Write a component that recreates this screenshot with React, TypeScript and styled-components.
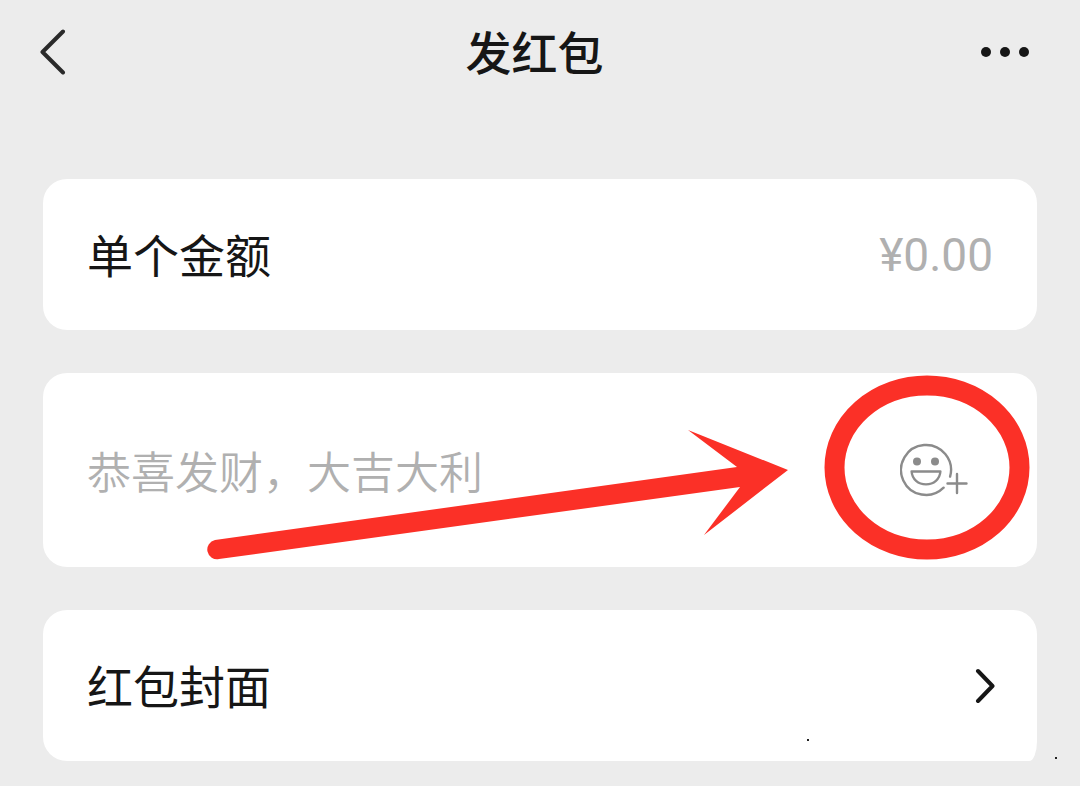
import React from "react";
import styled, { createGlobalStyle, css } from "styled-components";

const GlobalStyle = createGlobalStyle`
  * {
    box-sizing: border-box;
  }
  body {
    margin: 0;
    background: #ececec;
    color: #161616;
    font-family: Roboto, "Noto Sans CJK SC", sans-serif;
  }
`;

const Page = styled.div`
  min-height: 100vh;
`;

const Header = styled.header`
  display: flex;
  align-items: center;
  justify-content: space-between;
  height: 104px;
  padding: 0 50px 0 40px;
`;

const Title = styled.h1`
  margin: 0;
  padding-top: 4px;
  font-size: 46px;
  font-weight: 500;
  line-height: 64px;
`;

const IconButton = styled.button`
  display: flex;
  flex: none;
  align-items: center;
  padding: 0;
  border: 0;
  background: none;
  color: inherit;
  cursor: pointer;
`;

const Form = styled.form`
  display: flex;
  flex-direction: column;
  gap: 43px;
  padding: 75px 43px 25px;
`;

const cardStyle = css`
  position: relative;
  display: flex;
  align-items: center;
  justify-content: space-between;
  width: 100%;
  min-height: 151px;
  padding: 0 42px 0 44px;
  border: 0;
  border-radius: 24px;
  background: #ffffff;
  color: inherit;
  font: inherit;
  font-size: 46px;
  line-height: 64px;
  text-align: left;
`;

const Card = styled.div<{ $tall?: boolean }>`
  ${cardStyle}
  ${({ $tall }) => ($tall ? "min-height: 194px; padding-right: 67px;" : "padding-right: 44px;")}
`;

const CardButton = styled.button`
  ${cardStyle}
  border-bottom-right-radius: 8px 20px;
  cursor: pointer;
`;

const Label = styled.label`
  padding-top: 4px;
`;

const Field = styled.input`
  flex: 1;
  min-width: 0;
  height: 72px;
  padding: 0;
  border: 0;
  outline: 0;
  background: none;
  color: #161616;
  font: inherit;

  &::placeholder {
    color: #b0b0b0;
    opacity: 1;
  }
`;

const AmountField = styled(Field)`
  text-align: right;
`;

const MessageField = styled(Field)`
  padding-top: 8px;
  font-size: 44px;
  font-weight: 350;
`;

const Annotation = styled.svg`
  position: absolute;
  top: 0;
  right: 0;
  pointer-events: none;
`;

const Speck = styled.span<{ $right: number; $bottom: number }>`
  position: absolute;
  right: ${({ $right }) => $right}px;
  bottom: ${({ $bottom }) => $bottom}px;
  width: 2px;
  height: 2px;
  background: #222222;
`;

const BackIcon = () => (
  <svg width="48" height="48" viewBox="0 0 48 48" fill="none" stroke="#2a2a2a" strokeWidth="4" strokeLinecap="round" strokeLinejoin="round">
    <path d="M23 3.500L2.500 24L23 44.500" />
  </svg>
);

const MoreIcon = () => (
  <svg width="49" height="48" viewBox="0 0 49 48" fill="#161616">
    <circle cx="5" cy="24" r="5" />
    <circle cx="24" cy="24" r="5" />
    <circle cx="43" cy="24" r="5" />
  </svg>
);

const EmojiAddIcon = () => (
  <svg width="70" height="56" viewBox="0 0 70 56" fill="none" stroke="#8b8b8b" strokeWidth="2.400" strokeLinecap="round">
    <path d="M50.100 34.600A25 25 0 1 0 43.600 45.700" />
    <circle cx="17" cy="19.500" r="4" fill="#8b8b8b" stroke="none" />
    <circle cx="35" cy="19.500" r="4" fill="#8b8b8b" stroke="none" />
    <path d="M11.600 29.500H40.400C39.800 37.300 33.800 42.400 26 42.400S12.200 37.300 11.600 29.500Z" strokeLinejoin="round" />
    <path d="M57 32v19M47.500 41.500h19" />
  </svg>
);

const ForwardIcon = () => (
  <svg width="20" height="36" viewBox="0 0 20 36" fill="none" stroke="#161616" strokeWidth="4" strokeLinecap="round" strokeLinejoin="round">
    <path d="M3 3l14.500 15L3 33" />
  </svg>
);

const Pointer = () => (
  <Annotation width="994" height="194" viewBox="0 0 994 194" fill="#fb3027" aria-hidden="true">
    <path d="M172 167L694 94L645 57L745 97L661 162L697 114L176 186A9.500 9.500 0 0 1 172 167Z" />
    <ellipse cx="884" cy="94.500" rx="92.500" ry="82" fill="none" stroke="#fb3027" strokeWidth="20" />
  </Annotation>
);

export default function App() {
  return (
    <Page>
      <GlobalStyle />
      <Header>
        <IconButton type="button" aria-label="返回">
          <BackIcon />
        </IconButton>
        <Title>发红包</Title>
        <IconButton type="button" aria-label="更多">
          <MoreIcon />
        </IconButton>
      </Header>
      <Form>
        <Card>
          <Label htmlFor="amount">单个金额</Label>
          <AmountField id="amount" inputMode="decimal" placeholder="¥0.00" />
        </Card>
        <Card $tall>
          <MessageField aria-label="祝福语" placeholder="恭喜发财，大吉大利" />
          <IconButton type="button" aria-label="添加表情">
            <EmojiAddIcon />
          </IconButton>
          <Pointer />
        </Card>
        <CardButton type="button">
          <Label as="span">红包封面</Label>
          <ForwardIcon />
          <Speck $right={228} $bottom={20} />
          <Speck $right={-20} $bottom={2} />
        </CardButton>
      </Form>
    </Page>
  );
}
